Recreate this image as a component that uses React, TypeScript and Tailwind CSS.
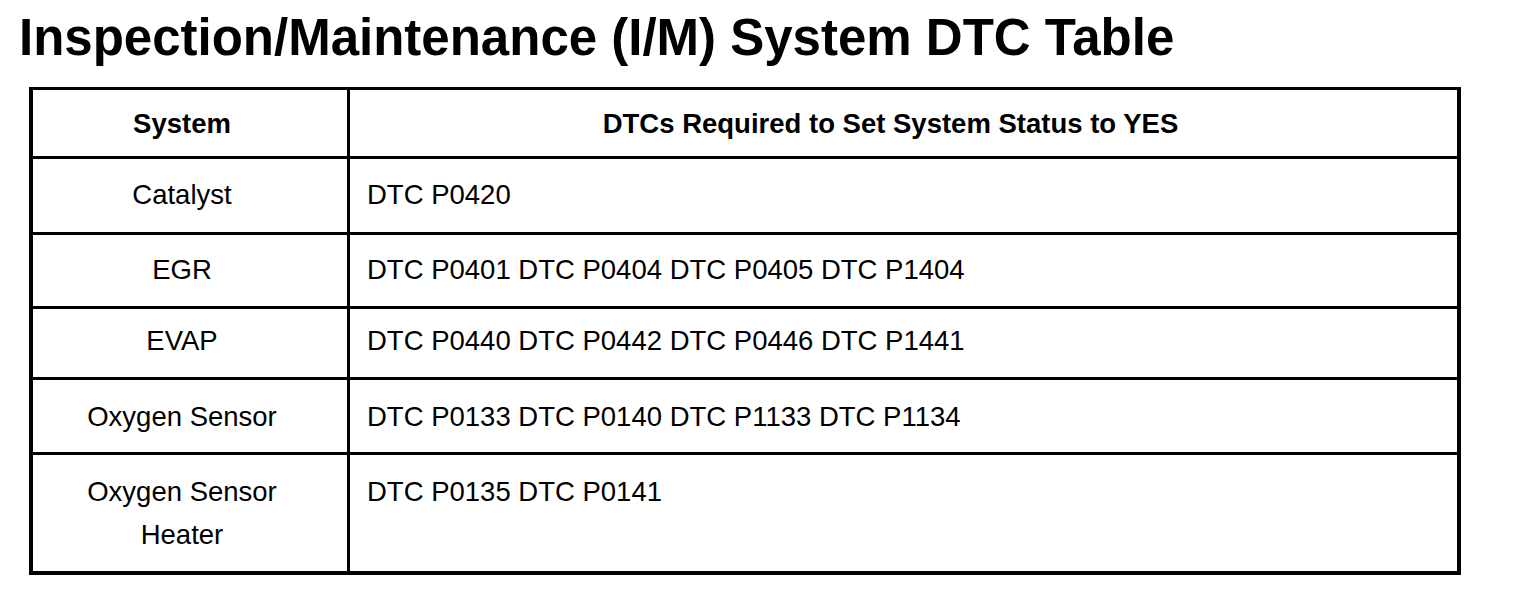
import React from "react";

const rows: { sys: React.ReactNode; dtc: string; h: string; pt: string }[] = [
  { sys: "Catalyst", dtc: "DTC P0420", h: "h-[76px]", pt: "pt-[14px]" },
  { sys: "EGR", dtc: "DTC P0401 DTC P0404 DTC P0405 DTC P1404", h: "h-[74px]", pt: "pt-[13px]" },
  { sys: "EVAP", dtc: "DTC P0440 DTC P0442 DTC P0446 DTC P1441", h: "h-[71px]", pt: "pt-[10px]" },
  { sys: "Oxygen Sensor", dtc: "DTC P0133 DTC P0140 DTC P1133 DTC P1134", h: "h-[75px]", pt: "pt-[15px]" },
  {
    sys: (
      <>
        Oxygen Sensor
        <br />
        Heater
      </>
    ),
    dtc: "DTC P0135 DTC P0141",
    h: "h-[116px]",
    pt: "pt-[15px]",
  },
];

export default function App() {
  return (
    <div className="w-[1520px] h-[608px] bg-white text-black overflow-hidden" style={{ fontFamily: '"Liberation Sans", Arial, sans-serif' }}>
      <h1 className="pt-[12px] pl-[19px] text-[51px] font-bold leading-none h-[62px]">
        Inspection/Maintenance (I/M) System DTC Table
      </h1>
      <div className="mt-[25px] ml-[29px] w-[1432px] border-l-[4px] border-t-[3px] border-r-[4px] border-b-[4px] border-black">
        <div className="flex h-[69px] border-b-[3px] border-black text-[27.5px] font-bold leading-[43px]">
          <div className="w-[317px] border-r-[3px] border-black flex items-center justify-center pr-[16px]">System</div>
          <div className="flex-1 flex items-center justify-center pr-[26px]">DTCs Required to Set System Status to YES</div>
        </div>
        {rows.map((r, i) => (
          <div
            key={i}
            className={`flex ${r.h} ${i < rows.length - 1 ? "border-b-[3px]" : ""} border-black text-[27.5px] leading-[43px]`}
          >
            <div className={`w-[317px] border-r-[3px] border-black text-center pr-[16px] ${r.pt}`}>{r.sys}</div>
            <div className={`flex-1 pl-[17px] ${r.pt}`}>{r.dtc}</div>
          </div>
        ))}
      </div>
    </div>
  );
}
